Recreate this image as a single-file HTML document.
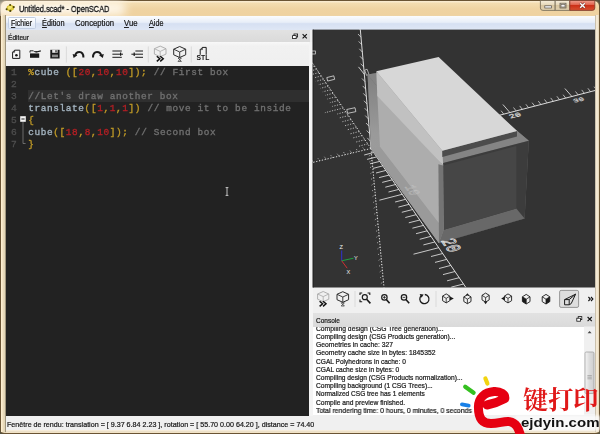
<!DOCTYPE html>
<html><head><meta charset="utf-8">
<style>
*{margin:0;padding:0;box-sizing:border-box}
html,body{width:600px;height:434px;overflow:hidden;background:#55523f;font-family:"Liberation Sans",sans-serif;}
.abs{position:absolute}
#frame{position:absolute;left:0;top:0;width:600px;height:434px;background:linear-gradient(#fbeed6 0,#f3dcb0 2.5px,#efd3a2 8px,#efd2a0 14px,#e9d6b0 16px,#e6d6b6 100%);border:1px solid #6a5434;border-radius:6px 6px 4px 4px;}
#edge{left:4.8px;top:15.6px;width:590.9px;height:415px;border:1px solid rgba(110,95,60,.6);background:#f0f0f0}
#hl{left:7.5px;top:17.3px;width:28.6px;height:12.2px;border:1px solid #c2cee2;border-radius:1.5px;background:linear-gradient(rgba(255,255,255,.85),rgba(230,238,250,.6))}
.mi,.cl{-webkit-text-stroke:0.22px #222}
#title{-webkit-text-stroke:0.35px #111}
#title,#menubar,#edtitle,#editor,#contitle,#console,#status{will-change:transform}
#title{left:19px;top:2.6px;font-size:9.4px;transform-origin:0 50%;color:#111;text-shadow:0 0 3px #fff,0 0 5px #fff;white-space:nowrap;line-height:12px}
#menubar{left:5px;top:16.4px;width:590.2px;height:14px;background:linear-gradient(#fbfcfe 0,#e8eef8 45%,#d6e0f2 55%,#dfe7f5 100%);}
.mi{position:absolute;top:2px;font-size:8.2px;line-height:11px;transform-origin:0 50%;color:#111;white-space:nowrap}
.mi u{text-decoration-thickness:0.6px;text-underline-offset:1px}
#edtitle{left:5px;top:29.6px;width:305px;height:12.8px;background:linear-gradient(#e2e2e2,#dadada);border-bottom:1px solid #cfcfcf}
#edtb{left:5px;top:42.4px;width:306px;height:23.4px;background:linear-gradient(#f8f8f8 0,#f1f1f1 4px,#efefef 100%)}
#editor{left:5.8px;top:65.6px;width:303.2px;height:350.2px;background:#222222}
#splitv{left:309px;top:42px;width:3.7px;height:374px;background:#f4f4f4}
#view{display:block}
#vtb{left:312.5px;top:287.5px;width:282.5px;height:24px;background:#f0f0f0}
#contitle{left:312.5px;top:312.5px;width:282.5px;height:14px;background:linear-gradient(#e2e2e2,#dadada)}
#console{left:312.5px;top:326.5px;width:282.5px;height:88.2px;background:#fff;overflow:hidden}
#status{left:5px;top:415.8px;width:590px;height:13.8px;background:#f0f0f0}
.code{position:absolute;margin-top:0.4px;left:23px;font-family:"Liberation Mono",monospace;font-size:9.4px;letter-spacing:0.64px;line-height:12.4px;white-space:pre;color:#a3b3bf;-webkit-text-stroke:0.35px}
.ln{position:absolute;margin-top:0.4px;left:5.8px;font-family:"Liberation Mono",monospace;font-size:9.6px;line-height:12.4px;color:#4e4e4e;-webkit-text-stroke:0.3px}
.y{color:#c09a26}.r{color:#b21f24}.c{color:#707070}
.cl{position:absolute;left:2.7px;font-size:7.4px;line-height:8.2px;transform-origin:0 50%;color:#111;white-space:nowrap}
</style></head><body>
<div id="frame"></div>
<div class="abs" style="z-index:5;left:1px;top:15px;width:5px;height:417px;background:linear-gradient(to right,#fff3d8 0,#f8e8c8 1.2px,#e9dbbc 2.4px,#e0d4b6 3.9px,#8a7f68 4.7px)"></div><div class="abs" style="z-index:5;left:595px;top:15px;width:4px;height:417px;background:linear-gradient(to right,#8a7f68 0,#fff5e2 0.9px,#eadfca 2px,#fff2da 3.2px,#c8b894 4px)"></div><div class="abs" style="z-index:5;left:6px;top:430px;width:589px;height:3px;background:linear-gradient(#fff5e2 0,#eadfca 1.2px,#f4e4c4 3px)"></div><div class="abs" style="left:0;top:0;width:150px;height:16px;overflow:hidden"><div class="abs" style="left:-6px;top:0.5px;width:132px;height:15px;border-radius:7px;background:#fffaf0;filter:blur(4px);opacity:.85"></div></div><div id="edge" class="abs"></div>
<div id="title" class="abs" style="transform:scaleX(0.7842)">Untitled.scad* - OpenSCAD</div>
<div id="menubar" class="abs">
<div id="hl" class="abs" style="left:2.5px;top:1.3px"></div><span id="m1" class="mi" style="left:5.5px;transform:scaleX(0.8539)"><u>F</u>ichier</span>
<span id="m2" class="mi" style="left:37px;transform:scaleX(0.8983)"><u>É</u>dition</span>
<span id="m3" class="mi" style="left:70px;transform:scaleX(0.9415)">Conception</span>
<span id="m4" class="mi" style="left:118.9px;transform:scaleX(0.9453)"><u>V</u>ue</span>
<span id="m5" class="mi" style="left:143.5px;transform:scaleX(0.8777)"><u>A</u>ide</span>
</div>
<div id="edtitle" class="abs"><span id="m6" class="mi" style="left:3.1px;top:1.9px;font-size:7.2px;transform:scaleX(0.9218)">Éditeur</span></div>
<div id="edtb" class="abs"></div>
<div id="editor" class="abs"><div class="abs" style="left:-0.8px;top:-0.6px">
<div class="abs" style="left:23px;top:25px;width:282px;height:12px;background:#2f2f2f"></div>
<div class="ln" style="top:1px">1</div><div class="code" style="top:1px"><span class="y">%</span>cube <span class="y">([</span><span class="r">20</span><span class="y">,</span><span class="r">10</span><span class="y">,</span><span class="r">10</span><span class="y">]);</span> <span class="c">// First box</span></div>
<div class="ln" style="top:13px">2</div>
<div class="ln" style="top:25px">3</div><div class="code" style="top:25px"><span class="c">//Let's draw another box</span></div>
<div class="ln" style="top:37px">4</div><div class="code" style="top:37px">translate<span class="y">([</span><span class="r">1</span><span class="y">,</span><span class="r">1</span><span class="y">,</span><span class="r">1</span><span class="y">])</span> <span class="c">// move it to be inside</span></div>
<div class="ln" style="top:49px">5</div><div class="code" style="top:49px"><span class="y">{</span></div>
<div class="ln" style="top:61px">6</div><div class="code" style="top:61px">cube<span class="y">([</span><span class="r">18</span><span class="y">,</span><span class="r">8</span><span class="y">,</span><span class="r">10</span><span class="y">]);</span> <span class="c">// Second box</span></div>
<div class="ln" style="top:73px">7</div><div class="code" style="top:73px"><span class="y">}</span></div>
</div>
</div>
<div id="splitv" class="abs"></div>
<svg id="view" class="abs" style="left:312px;top:29px" width="283" height="259" viewBox="312 29 283 259"><rect x="312.7" y="29.6" width="282.3" height="257.9" fill="#333"/><rect x="312.7" y="29.6" width="1" height="257.9" fill="#242424"/><line x1="360.3" y1="29.5" x2="371.0" y2="148.5" stroke="#ededed" stroke-width="0.90" />
<line x1="370.3" y1="141.1" x2="367.3" y2="137.9" stroke="#ededed" stroke-width="0.70" />
<line x1="369.7" y1="133.7" x2="366.7" y2="130.5" stroke="#ededed" stroke-width="0.70" />
<line x1="369.0" y1="126.2" x2="366.0" y2="123.0" stroke="#ededed" stroke-width="0.70" />
<line x1="368.3" y1="118.8" x2="365.3" y2="115.6" stroke="#ededed" stroke-width="0.70" />
<line x1="367.7" y1="111.4" x2="364.7" y2="108.2" stroke="#ededed" stroke-width="0.70" />
<line x1="367.0" y1="104.0" x2="364.0" y2="100.8" stroke="#ededed" stroke-width="0.70" />
<line x1="366.3" y1="96.6" x2="363.3" y2="93.4" stroke="#ededed" stroke-width="0.70" />
<line x1="365.7" y1="89.1" x2="362.7" y2="85.9" stroke="#ededed" stroke-width="0.70" />
<line x1="365.0" y1="81.7" x2="362.0" y2="78.5" stroke="#ededed" stroke-width="0.70" />
<line x1="364.3" y1="74.3" x2="358.5" y2="66.9" stroke="#ededed" stroke-width="0.80" />
<line x1="363.7" y1="66.9" x2="360.7" y2="63.7" stroke="#ededed" stroke-width="0.70" />
<line x1="363.0" y1="59.5" x2="360.0" y2="56.3" stroke="#ededed" stroke-width="0.70" />
<line x1="362.3" y1="52.0" x2="359.3" y2="48.8" stroke="#ededed" stroke-width="0.70" />
<line x1="361.7" y1="44.6" x2="358.7" y2="41.4" stroke="#ededed" stroke-width="0.70" />
<line x1="361.0" y1="37.2" x2="358.0" y2="34.0" stroke="#ededed" stroke-width="0.70" />
<line x1="360.3" y1="29.8" x2="357.3" y2="26.6" stroke="#ededed" stroke-width="0.70" />
<rect x="365.4" y="69.6" width="2.6" height="5.6" fill="none" stroke="#e6e6e6" stroke-width="0.6" transform="rotate(-20 366.5 72)"/>
<line x1="371.0" y1="148.5" x2="595.0" y2="90.5" stroke="#ededed" stroke-width="0.90" />
<line x1="497.5" y1="115.7" x2="494.9" y2="112.3" stroke="#ededed" stroke-width="0.70" />
<line x1="503.7" y1="114.1" x2="501.1" y2="110.7" stroke="#ededed" stroke-width="0.70" />
<line x1="509.9" y1="112.5" x2="502.9" y2="104.5" stroke="#ededed" stroke-width="0.80" />
<line x1="516.1" y1="110.9" x2="513.5" y2="107.5" stroke="#ededed" stroke-width="0.70" />
<line x1="522.3" y1="109.3" x2="519.7" y2="105.9" stroke="#ededed" stroke-width="0.70" />
<line x1="528.5" y1="107.7" x2="525.9" y2="104.3" stroke="#ededed" stroke-width="0.70" />
<line x1="534.7" y1="106.1" x2="532.1" y2="102.7" stroke="#ededed" stroke-width="0.70" />
<line x1="540.9" y1="104.5" x2="538.3" y2="101.1" stroke="#ededed" stroke-width="0.70" />
<line x1="547.1" y1="102.9" x2="544.5" y2="99.5" stroke="#ededed" stroke-width="0.70" />
<line x1="553.3" y1="101.3" x2="550.7" y2="97.9" stroke="#ededed" stroke-width="0.70" />
<line x1="559.5" y1="99.7" x2="556.9" y2="96.3" stroke="#ededed" stroke-width="0.70" />
<line x1="565.7" y1="98.1" x2="563.1" y2="94.7" stroke="#ededed" stroke-width="0.70" />
<line x1="571.9" y1="96.5" x2="564.9" y2="88.5" stroke="#ededed" stroke-width="0.80" />
<line x1="578.1" y1="94.9" x2="575.5" y2="91.5" stroke="#ededed" stroke-width="0.70" />
<line x1="584.3" y1="93.3" x2="581.7" y2="89.9" stroke="#ededed" stroke-width="0.70" />
<line x1="590.5" y1="91.7" x2="587.9" y2="88.3" stroke="#ededed" stroke-width="0.70" />
<line x1="596.7" y1="90.1" x2="594.1" y2="86.7" stroke="#ededed" stroke-width="0.70" />
<text font-size="10" fill="none" stroke="#e6e6e6" stroke-width="0.55" font-family="Liberation Mono,monospace" transform="matrix(0.93,-0.24,0.37,0.54,510.6,118.6)">20</text>
<text font-size="10" fill="none" stroke="#e6e6e6" stroke-width="0.55" font-family="Liberation Mono,monospace" transform="matrix(0.85,-0.22,0.33,0.48,574.6,102.8)">30</text>
<line x1="370.7" y1="148.2" x2="465.7" y2="287.2" stroke="#ededed" stroke-width="0.90" />
<line x1="373.6" y1="152.5" x2="364.2" y2="155.0" stroke="#ededed" stroke-width="0.80" />
<line x1="376.6" y1="156.9" x2="367.1" y2="159.4" stroke="#ededed" stroke-width="0.80" />
<line x1="379.7" y1="161.4" x2="370.0" y2="163.8" stroke="#ededed" stroke-width="0.80" />
<line x1="382.7" y1="165.9" x2="373.0" y2="168.4" stroke="#ededed" stroke-width="0.80" />
<line x1="385.9" y1="170.4" x2="376.0" y2="173.0" stroke="#ededed" stroke-width="0.80" />
<line x1="389.0" y1="175.1" x2="379.1" y2="177.6" stroke="#ededed" stroke-width="0.80" />
<line x1="392.3" y1="179.8" x2="382.2" y2="182.4" stroke="#ededed" stroke-width="0.80" />
<line x1="395.5" y1="184.5" x2="385.3" y2="187.2" stroke="#ededed" stroke-width="0.80" />
<line x1="398.8" y1="189.4" x2="388.5" y2="192.0" stroke="#ededed" stroke-width="0.80" />
<line x1="402.2" y1="194.3" x2="379.4" y2="200.2" stroke="#ededed" stroke-width="0.80" />
<line x1="405.6" y1="199.3" x2="395.1" y2="202.0" stroke="#ededed" stroke-width="0.80" />
<line x1="409.1" y1="204.3" x2="398.4" y2="207.1" stroke="#ededed" stroke-width="0.80" />
<line x1="412.6" y1="209.5" x2="401.8" y2="212.3" stroke="#ededed" stroke-width="0.80" />
<line x1="416.1" y1="214.7" x2="405.3" y2="217.5" stroke="#ededed" stroke-width="0.80" />
<line x1="419.8" y1="220.0" x2="408.8" y2="222.8" stroke="#ededed" stroke-width="0.80" />
<line x1="423.4" y1="225.4" x2="412.4" y2="228.2" stroke="#ededed" stroke-width="0.80" />
<line x1="427.2" y1="230.8" x2="416.0" y2="233.7" stroke="#ededed" stroke-width="0.80" />
<line x1="431.0" y1="236.3" x2="419.7" y2="239.3" stroke="#ededed" stroke-width="0.80" />
<line x1="434.8" y1="242.0" x2="423.4" y2="244.9" stroke="#ededed" stroke-width="0.80" />
<line x1="438.7" y1="247.7" x2="413.5" y2="254.2" stroke="#ededed" stroke-width="0.80" />
<line x1="442.7" y1="253.5" x2="431.0" y2="256.5" stroke="#ededed" stroke-width="0.80" />
<line x1="446.7" y1="259.4" x2="435.0" y2="262.4" stroke="#ededed" stroke-width="0.80" />
<line x1="450.8" y1="265.4" x2="439.0" y2="268.5" stroke="#ededed" stroke-width="0.80" />
<line x1="455.0" y1="271.5" x2="443.0" y2="274.6" stroke="#ededed" stroke-width="0.80" />
<line x1="459.2" y1="277.7" x2="447.1" y2="280.8" stroke="#ededed" stroke-width="0.80" />
<line x1="463.5" y1="284.0" x2="451.3" y2="287.1" stroke="#ededed" stroke-width="0.80" />
<line x1="370.7" y1="148.2" x2="303.7" y2="50.3" stroke="#ededed" stroke-width="0.90" stroke-dasharray="1.3 1.6"/>
<line x1="367.7" y1="143.9" x2="358.5" y2="146.3" stroke="#ededed" stroke-width="0.70" stroke-dasharray="1.2 1.4"/>
<line x1="364.9" y1="139.7" x2="355.8" y2="142.1" stroke="#ededed" stroke-width="0.70" stroke-dasharray="1.2 1.4"/>
<line x1="362.0" y1="135.6" x2="353.0" y2="137.9" stroke="#ededed" stroke-width="0.70" stroke-dasharray="1.2 1.4"/>
<line x1="359.2" y1="131.5" x2="350.3" y2="133.8" stroke="#ededed" stroke-width="0.70" stroke-dasharray="1.2 1.4"/>
<line x1="356.5" y1="127.4" x2="347.6" y2="129.7" stroke="#ededed" stroke-width="0.70" stroke-dasharray="1.2 1.4"/>
<line x1="353.7" y1="123.4" x2="345.0" y2="125.7" stroke="#ededed" stroke-width="0.70" stroke-dasharray="1.2 1.4"/>
<line x1="351.0" y1="119.5" x2="342.4" y2="121.7" stroke="#ededed" stroke-width="0.70" stroke-dasharray="1.2 1.4"/>
<line x1="348.4" y1="115.6" x2="339.8" y2="117.8" stroke="#ededed" stroke-width="0.70" stroke-dasharray="1.2 1.4"/>
<line x1="345.7" y1="111.8" x2="337.3" y2="114.0" stroke="#ededed" stroke-width="0.70" stroke-dasharray="1.2 1.4"/>
<line x1="343.2" y1="108.0" x2="324.9" y2="112.7" stroke="#ededed" stroke-width="0.70" stroke-dasharray="1.2 1.4"/>
<line x1="340.6" y1="104.3" x2="332.3" y2="106.4" stroke="#ededed" stroke-width="0.70" stroke-dasharray="1.2 1.4"/>
<line x1="338.1" y1="100.6" x2="329.9" y2="102.7" stroke="#ededed" stroke-width="0.70" stroke-dasharray="1.2 1.4"/>
<line x1="335.6" y1="96.9" x2="327.5" y2="99.0" stroke="#ededed" stroke-width="0.70" stroke-dasharray="1.2 1.4"/>
<line x1="333.1" y1="93.3" x2="325.1" y2="95.4" stroke="#ededed" stroke-width="0.70" stroke-dasharray="1.2 1.4"/>
<line x1="330.7" y1="89.8" x2="322.8" y2="91.8" stroke="#ededed" stroke-width="0.70" stroke-dasharray="1.2 1.4"/>
<line x1="328.3" y1="86.2" x2="320.5" y2="88.3" stroke="#ededed" stroke-width="0.70" stroke-dasharray="1.2 1.4"/>
<line x1="325.9" y1="82.8" x2="318.2" y2="84.8" stroke="#ededed" stroke-width="0.70" stroke-dasharray="1.2 1.4"/>
<line x1="323.6" y1="79.4" x2="315.9" y2="81.3" stroke="#ededed" stroke-width="0.70" stroke-dasharray="1.2 1.4"/>
<line x1="321.3" y1="76.0" x2="313.7" y2="77.9" stroke="#ededed" stroke-width="0.70" stroke-dasharray="1.2 1.4"/>
<line x1="319.0" y1="72.6" x2="302.7" y2="76.8" stroke="#ededed" stroke-width="0.70" stroke-dasharray="1.2 1.4"/>
<line x1="316.7" y1="69.3" x2="309.4" y2="71.2" stroke="#ededed" stroke-width="0.70" stroke-dasharray="1.2 1.4"/>
<line x1="314.5" y1="66.1" x2="307.2" y2="67.9" stroke="#ededed" stroke-width="0.70" stroke-dasharray="1.2 1.4"/>
<line x1="312.3" y1="62.8" x2="305.1" y2="64.7" stroke="#ededed" stroke-width="0.70" stroke-dasharray="1.2 1.4"/>
<line x1="310.1" y1="59.6" x2="303.0" y2="61.5" stroke="#ededed" stroke-width="0.70" stroke-dasharray="1.2 1.4"/>
<line x1="307.9" y1="56.5" x2="301.0" y2="58.3" stroke="#ededed" stroke-width="0.70" stroke-dasharray="1.2 1.4"/>
<line x1="305.8" y1="53.4" x2="298.9" y2="55.1" stroke="#ededed" stroke-width="0.70" stroke-dasharray="1.2 1.4"/>
<line x1="371.0" y1="148.5" x2="312.5" y2="162.5" stroke="#ededed" stroke-width="0.90" stroke-dasharray="1.3 1.6"/>
<line x1="364.6" y1="150.0" x2="362.2" y2="146.8" stroke="#ededed" stroke-width="0.70" stroke-dasharray="1 1"/>
<line x1="358.2" y1="151.6" x2="355.8" y2="148.4" stroke="#ededed" stroke-width="0.70" stroke-dasharray="1 1"/>
<line x1="351.8" y1="153.1" x2="349.4" y2="149.9" stroke="#ededed" stroke-width="0.70" stroke-dasharray="1 1"/>
<line x1="345.4" y1="154.6" x2="343.0" y2="151.4" stroke="#ededed" stroke-width="0.70" stroke-dasharray="1 1"/>
<line x1="339.0" y1="156.2" x2="336.6" y2="153.0" stroke="#ededed" stroke-width="0.70" stroke-dasharray="1 1"/>
<line x1="332.6" y1="157.7" x2="330.2" y2="154.5" stroke="#ededed" stroke-width="0.70" stroke-dasharray="1 1"/>
<line x1="326.2" y1="159.2" x2="323.8" y2="156.0" stroke="#ededed" stroke-width="0.70" stroke-dasharray="1 1"/>
<line x1="319.8" y1="160.8" x2="317.4" y2="157.6" stroke="#ededed" stroke-width="0.70" stroke-dasharray="1 1"/>
<line x1="313.4" y1="162.3" x2="311.0" y2="159.1" stroke="#ededed" stroke-width="0.70" stroke-dasharray="1 1"/>
<line x1="371.0" y1="148.5" x2="384.0" y2="287.5" stroke="#ededed" stroke-width="0.90" stroke-dasharray="1.3 1.6"/>
<line x1="371.5" y1="154.3" x2="368.1" y2="156.7" stroke="#ededed" stroke-width="0.70" stroke-dasharray="1 1.2"/>
<line x1="372.1" y1="160.1" x2="368.7" y2="162.5" stroke="#ededed" stroke-width="0.70" stroke-dasharray="1 1.2"/>
<line x1="372.6" y1="165.9" x2="369.2" y2="168.3" stroke="#ededed" stroke-width="0.70" stroke-dasharray="1 1.2"/>
<line x1="373.2" y1="171.7" x2="369.8" y2="174.1" stroke="#ededed" stroke-width="0.70" stroke-dasharray="1 1.2"/>
<line x1="373.7" y1="177.5" x2="370.3" y2="179.9" stroke="#ededed" stroke-width="0.70" stroke-dasharray="1 1.2"/>
<line x1="374.2" y1="183.2" x2="370.9" y2="185.7" stroke="#ededed" stroke-width="0.70" stroke-dasharray="1 1.2"/>
<line x1="374.8" y1="189.0" x2="371.4" y2="191.4" stroke="#ededed" stroke-width="0.70" stroke-dasharray="1 1.2"/>
<line x1="375.3" y1="194.8" x2="371.9" y2="197.2" stroke="#ededed" stroke-width="0.70" stroke-dasharray="1 1.2"/>
<line x1="375.9" y1="200.6" x2="372.5" y2="203.0" stroke="#ededed" stroke-width="0.70" stroke-dasharray="1 1.2"/>
<line x1="376.4" y1="206.4" x2="373.0" y2="208.8" stroke="#ededed" stroke-width="0.70" stroke-dasharray="1 1.2"/>
<line x1="377.0" y1="212.2" x2="373.6" y2="214.6" stroke="#ededed" stroke-width="0.70" stroke-dasharray="1 1.2"/>
<line x1="377.5" y1="218.0" x2="374.1" y2="220.4" stroke="#ededed" stroke-width="0.70" stroke-dasharray="1 1.2"/>
<line x1="378.0" y1="223.8" x2="374.6" y2="226.2" stroke="#ededed" stroke-width="0.70" stroke-dasharray="1 1.2"/>
<line x1="378.6" y1="229.6" x2="375.2" y2="232.0" stroke="#ededed" stroke-width="0.70" stroke-dasharray="1 1.2"/>
<line x1="379.1" y1="235.4" x2="375.7" y2="237.8" stroke="#ededed" stroke-width="0.70" stroke-dasharray="1 1.2"/>
<line x1="379.7" y1="241.2" x2="376.3" y2="243.6" stroke="#ededed" stroke-width="0.70" stroke-dasharray="1 1.2"/>
<line x1="380.2" y1="247.0" x2="376.8" y2="249.4" stroke="#ededed" stroke-width="0.70" stroke-dasharray="1 1.2"/>
<line x1="380.8" y1="252.8" x2="377.4" y2="255.2" stroke="#ededed" stroke-width="0.70" stroke-dasharray="1 1.2"/>
<line x1="381.3" y1="258.5" x2="377.9" y2="260.9" stroke="#ededed" stroke-width="0.70" stroke-dasharray="1 1.2"/>
<line x1="381.8" y1="264.3" x2="378.4" y2="266.7" stroke="#ededed" stroke-width="0.70" stroke-dasharray="1 1.2"/>
<line x1="382.4" y1="270.1" x2="379.0" y2="272.5" stroke="#ededed" stroke-width="0.70" stroke-dasharray="1 1.2"/>
<line x1="382.9" y1="275.9" x2="379.5" y2="278.3" stroke="#ededed" stroke-width="0.70" stroke-dasharray="1 1.2"/>
<line x1="383.5" y1="281.7" x2="380.1" y2="284.1" stroke="#ededed" stroke-width="0.70" stroke-dasharray="1 1.2"/>
<rect x="327" y="76.8" width="7.2" height="3.6" fill="none" stroke="#e6e6e6" stroke-width="0.7" transform="rotate(-14 330 78)"/>
<rect x="347" y="108.6" width="8.4" height="4" fill="none" stroke="#e6e6e6" stroke-width="0.7" transform="rotate(-12 351 110)"/>
<rect x="311" y="51" width="4.6" height="3" fill="none" stroke="#e6e6e6" stroke-width="0.7"/>
<polygon points="367.6,74.5 437.0,63.0 528.8,140.7 524.6,218.5 439.0,243.3 371.0,148.5" fill="#6e6e6e" />
<polygon points="367.6,74.5 438.4,164.3 528.8,140.7 437.0,63.0" fill="#848484" />
<defs><linearGradient id="lf" x1="0" y1="0" x2="0" y2="1"><stop offset="0" stop-color="#808080"/><stop offset="0.35" stop-color="#9a9a9a"/><stop offset="1" stop-color="#a0a0a0"/></linearGradient></defs>
<polygon points="367.6,74.5 438.4,164.3 439.0,243.3 371.0,148.5" fill="url(#lf)" />
<polygon points="438.4,164.3 528.8,140.7 524.6,218.5 439.0,243.3" fill="#3c3c3c" />
<polygon points="443.8,229.8 516.3,208.5 524.6,218.5 439.0,243.3" fill="#686868" />
<polygon points="377.2,92.5 443.2,165.6 443.8,229.8 380.0,147.0" fill="#adadad" />
<polygon points="371.0,148.5 380.0,147.0 443.8,229.8 439.0,243.3" fill="#9a9a9a" />
<polygon points="443.2,165.6 516.3,146.0 516.3,208.5 443.8,229.8" fill="#464646" />
<polygon points="376.3,71.2 442.3,150.7 443.2,165.6 377.3,96.0" fill="#c1c1c1" />
<polygon points="442.3,150.7 517.0,130.9 517.0,136.6 442.3,157.0" fill="#4c4c4c" />
<polygon points="376.3,71.2 442.3,150.7 517.0,130.9 438.6,57.0" fill="#d7d7d7" />
<polygon points="438.4,164.3 443.2,165.6 443.8,229.8 439.0,243.3" fill="#747474" />
<text font-size="10" fill="none" stroke="#c0c0c0" stroke-width="0.3" font-family="Liberation Mono,monospace" transform="matrix(0.55,0.80,-1.45,0.37,404.5,186.5)">10</text>
<text font-size="10" fill="none" stroke="#f0f0f0" stroke-width="0.42" font-family="Liberation Mono,monospace" transform="matrix(0.706,1.03,-1.91,0.49,440.8,240.6)">20</text>
<line x1="341.7" y1="260.8" x2="341.7" y2="250.5" stroke="#3030d0" stroke-width="1.00" />
<line x1="341.7" y1="260.8" x2="353.5" y2="258.2" stroke="#20a040" stroke-width="1.00" />
<line x1="341.7" y1="260.8" x2="347.2" y2="268.2" stroke="#d03030" stroke-width="1.00" />
<text x="339.6" y="248.6" font-size="5.6" fill="#f0f0f0" font-family="Liberation Sans,sans-serif">Z</text>
<text x="354" y="260" font-size="5.6" fill="#f0f0f0" font-family="Liberation Sans,sans-serif">Y</text>
<text x="346.6" y="273.5" font-size="5.6" fill="#f0f0f0" font-family="Liberation Sans,sans-serif">X</text></svg>
<div id="vtb" class="abs"></div>
<div id="contitle" class="abs"><span id="m7" class="mi" style="left:2.8px;top:1.9px;font-size:7.2px;transform:scaleX(0.9062)">Console</span></div>
<div id="console" class="abs">
<div id="c0" class="cl" style="top:-2.10px;transform:scaleX(0.9129)">Compiling design (CSG Tree generation)...</div>
<div id="c1" class="cl" style="top:6.09px;transform:scaleX(0.9049)">Compiling design (CSG Products generation)...</div>
<div id="c2" class="cl" style="top:14.28px;transform:scaleX(0.9143)">Geometries in cache: 327</div>
<div id="c3" class="cl" style="top:22.47px;transform:scaleX(0.9204)">Geometry cache size in bytes: 1845352</div>
<div id="c4" class="cl" style="top:30.66px;transform:scaleX(0.8909)">CGAL Polyhedrons in cache: 0</div>
<div id="c5" class="cl" style="top:38.85px;transform:scaleX(0.8998)">CGAL cache size in bytes: 0</div>
<div id="c6" class="cl" style="top:47.04px;transform:scaleX(0.8983)">Compiling design (CSG Products normalization)...</div>
<div id="c7" class="cl" style="top:55.23px;transform:scaleX(0.9019)">Compiling background (1 CSG Trees)...</div>
<div id="c8" class="cl" style="top:63.42px;transform:scaleX(0.8887)">Normalized CSG tree has 1 elements</div>
<div id="c9" class="cl" style="top:71.61px;transform:scaleX(0.9027)">Compile and preview finished.</div>
<div id="c10" class="cl" style="top:79.80px;transform:scaleX(0.9295)">Total rendering time: 0 hours, 0 minutes, 0 seconds</div>
</div>
<div id="status" class="abs"><span id="m8" class="mi" style="left:1.5px;top:2.9px;font-size:7.6px;transform:scaleX(0.9398)">Fenêtre de rendu: translation = [ 9.37 6.84 2.23 ], rotation = [ 55.70 0.00 64.20 ], distance = 74.40</span></div>
<svg class="abs" style="left:0;top:0;pointer-events:none" width="600" height="434" viewBox="0 0 600 434"><line x1="66.4" y1="46.5" x2="66.4" y2="62.5" stroke="#d4d4d4" stroke-width="0.8"/>
<line x1="148.3" y1="46.5" x2="148.3" y2="62.5" stroke="#d4d4d4" stroke-width="0.8"/>
<line x1="191.3" y1="46.5" x2="191.3" y2="62.5" stroke="#d4d4d4" stroke-width="0.8"/>
<path d="M14.6 50.2 H19.8 V58.4 H12.6 V52.2 Z" fill="#f6f6f6" stroke="#1a1a1a" stroke-width="1"/>
<path d="M14.6 50.2 V52.2 H12.6" fill="none" stroke="#1a1a1a" stroke-width="0.8"/>
<circle cx="16.4" cy="55.2" r="1.3" fill="#1a1a1a"/>
<path d="M30 53.4 H39.2 V57.8 H30 Z" fill="#1a1a1a"/>
<path d="M30 52.6 V50.8 H33.4 L34.2 51.6 H37.5" fill="none" stroke="#1a1a1a" stroke-width="0.9"/>
<path d="M35.5 52.3 L40.8 50.9" stroke="#1a1a1a" stroke-width="1.1"/>
<path d="M50.3 49.8 H59.6 V58.5 H50.3 Z" fill="#1a1a1a"/>
<rect x="52.2" y="49.8" width="5.4" height="3" fill="#e8e8e8"/>
<rect x="55.4" y="50.2" width="1.2" height="2.2" fill="#1a1a1a"/>
<rect x="52" y="54.6" width="6" height="2.6" fill="#8a8a8a"/>
<path d="M75.2 56 C75.5 53 77.5 51.9 79.4 51.9 C82 51.9 83.4 54 83.4 57.4" fill="none" stroke="#1a1a1a" stroke-width="2"/>
<path d="M72.6 54 L77.4 55.2 L73.6 58 Z" fill="#1a1a1a"/>
<path d="M101.2 56 C100.9 53 98.9 51.9 97 51.9 C94.4 51.9 93 54 93 57.4" fill="none" stroke="#1a1a1a" stroke-width="2"/>
<path d="M103.8 54 L99 55.2 L102.8 58 Z" fill="#1a1a1a"/>
<line x1="112.4" y1="51" x2="121.8" y2="51" stroke="#1a1a1a" stroke-width="1"/>
<line x1="112.4" y1="57.3" x2="121.8" y2="57.3" stroke="#1a1a1a" stroke-width="1"/>
<line x1="112.4" y1="54.2" x2="123" y2="54.2" stroke="#1a1a1a" stroke-width="1"/>
<line x1="120.6" y1="52.6" x2="120.6" y2="55.8" stroke="#1a1a1a" stroke-width="1.2"/>
<line x1="135.4" y1="51" x2="143" y2="51" stroke="#1a1a1a" stroke-width="1"/>
<line x1="135.4" y1="57.3" x2="143" y2="57.3" stroke="#1a1a1a" stroke-width="1"/>
<line x1="131.4" y1="54.2" x2="143" y2="54.2" stroke="#1a1a1a" stroke-width="1"/>
<line x1="134.2" y1="52.4" x2="134.2" y2="56" stroke="#1a1a1a" stroke-width="1.2"/>
<polygon points="160.2,46.1 154.4,48.7 154.4,54.1 160.2,56.7 166.0,54.1 166.0,48.7" fill="none" stroke="#a8a8a8" stroke-width="0.9" stroke-linejoin="round"/><path d="M154.4 48.7 L160.2 51.4 L166.0 48.7 M160.2 51.4 V56.7" fill="none" stroke="#a8a8a8" stroke-width="0.81"/>
<path d="M156.8 56.2 l3.0 2.6 l-3.0 2.6 M160.2 56.2 l3.0 2.6 l-3.0 2.6" fill="none" stroke="#111" stroke-width="1.5"/>
<polygon points="179.7,46.5 173.7,49.2 173.7,54.8 179.7,57.5 185.7,54.8 185.7,49.2" fill="none" stroke="#2a2a2a" stroke-width="1.0" stroke-linejoin="round"/><path d="M173.7 49.2 L179.7 52.0 L185.7 49.2 M179.7 52.0 V57.5" fill="none" stroke="#2a2a2a" stroke-width="0.9"/>
<path d="M178 58 H181.4 L178 61.4 H181.4 Z" fill="none" stroke="#2a2a2a" stroke-width="0.7"/>
<path d="M200.2 54.8 V49.6 L202.4 47.4 H206.2 V54.8" fill="none" stroke="#1a1a1a" stroke-width="1"/>
<path d="M200.2 49.6 H202.4 V47.4" fill="none" stroke="#1a1a1a" stroke-width="0.7"/>
<text x="196.6" y="60.4" font-size="7" font-weight="bold" fill="#111" font-family="Liberation Sans,sans-serif" textLength="12.8" lengthAdjust="spacingAndGlyphs">STL</text>
<rect x="294.0" y="34" width="3.6" height="3" fill="#fff" stroke="#111" stroke-width="0.8"/>
<rect x="292.6" y="35.6" width="3.6" height="3" fill="#fff" stroke="#111" stroke-width="0.8"/>
<path d="M302.6 34.2 l4.2 4.2 m0 -4.2 l-4.2 4.2" stroke="#111" stroke-width="1.1" fill="none"/>
<rect x="578.1999999999999" y="316.6" width="3.6" height="3" fill="#fff" stroke="#111" stroke-width="0.8"/>
<rect x="576.8" y="318.20000000000005" width="3.6" height="3" fill="#fff" stroke="#111" stroke-width="0.8"/>
<path d="M587.6 317 l4.2 4.2 m0 -4.2 l-4.2 4.2" stroke="#111" stroke-width="1.1" fill="none"/>
<line x1="355" y1="291" x2="355" y2="307" stroke="#d4d4d4" stroke-width="0.8"/>
<line x1="436" y1="291" x2="436" y2="307" stroke="#d4d4d4" stroke-width="0.8"/>
<polygon points="323.2,291.5 317.6,294.0 317.6,299.2 323.2,301.7 328.8,299.2 328.8,294.0" fill="none" stroke="#a8a8a8" stroke-width="0.9" stroke-linejoin="round"/><path d="M317.6 294.0 L323.2 296.6 L328.8 294.0 M323.2 296.6 V301.7" fill="none" stroke="#a8a8a8" stroke-width="0.81"/>
<path d="M319.6 301.2 l3.0 2.6 l-3.0 2.6 M323.0 301.2 l3.0 2.6 l-3.0 2.6" fill="none" stroke="#111" stroke-width="1.5"/>
<polygon points="342.8,291.7 337.0,294.3 337.0,299.7 342.8,302.3 348.6,299.7 348.6,294.3" fill="none" stroke="#2a2a2a" stroke-width="1.0" stroke-linejoin="round"/><path d="M337.0 294.3 L342.8 297.0 L348.6 294.3 M342.8 297.0 V302.3" fill="none" stroke="#2a2a2a" stroke-width="0.9"/>
<path d="M341.2 302.8 H344.4 L341.2 306 H344.4 Z" fill="none" stroke="#2a2a2a" stroke-width="0.7"/>
<path d="M360 295 V293 H362.2 M367.6 293 H369.8 V295 M360 299.6 V301.8 H362.2" fill="none" stroke="#1a1a1a" stroke-width="1.1"/>
<circle cx="364.8" cy="297.2" r="2.5" fill="none" stroke="#1a1a1a" stroke-width="1.2"/>
<line x1="366.6" y1="299.2" x2="370.4" y2="303.4" stroke="#1a1a1a" stroke-width="1.6"/>
<circle cx="384.4" cy="297.4" r="2.7" fill="none" stroke="#1a1a1a" stroke-width="1.2"/>
<line x1="386.29999999999995" y1="299.4" x2="389.59999999999997" y2="303.2" stroke="#1a1a1a" stroke-width="1.6"/>
<line x1="383.0" y1="297.4" x2="385.79999999999995" y2="297.4" stroke="#1a1a1a" stroke-width="0.8"/>
<line x1="384.4" y1="296" x2="384.4" y2="298.8" stroke="#1a1a1a" stroke-width="0.8"/>
<circle cx="404" cy="297.4" r="2.7" fill="none" stroke="#1a1a1a" stroke-width="1.2"/>
<line x1="405.9" y1="299.4" x2="409.2" y2="303.2" stroke="#1a1a1a" stroke-width="1.6"/>
<line x1="402.6" y1="297.4" x2="405.4" y2="297.4" stroke="#1a1a1a" stroke-width="0.8"/>
<path d="M421.4 295.6 A4.6 4.6 0 1 0 424.8 294.5" fill="none" stroke="#1a1a1a" stroke-width="1.3"/>
<path d="M419.6 294 L423.6 294.4 L421.6 297.8 Z" fill="#1a1a1a"/>
<polygon points="446.2,293.9 442.6,296.1 442.6,300.7 446.2,302.9 449.8,300.7 449.8,296.1" fill="none" stroke="#1a1a1a" stroke-width="0.9" stroke-linejoin="round"/><path d="M442.6 296.1 L446.2 298.4 L449.8 296.1 M446.2 298.4 V302.9" fill="none" stroke="#1a1a1a" stroke-width="0.8"/>
<path d="M450 296.4 L453.8 298.4 L450 300.4 Z" fill="#1a1a1a"/>
<polygon points="467.4,294.7 463.8,296.9 463.8,301.5 467.4,303.7 471.0,301.5 471.0,296.9" fill="none" stroke="#1a1a1a" stroke-width="0.9" stroke-linejoin="round"/><path d="M463.8 296.9 L467.4 299.2 L471.0 296.9 M467.4 299.2 V303.7" fill="none" stroke="#1a1a1a" stroke-width="0.8"/>
<path d="M465.6 295.4 L467.4 293.2 L469.2 295.4 Z" fill="#1a1a1a"/>
<polygon points="485.6,293.1 482.0,295.3 482.0,299.9 485.6,302.1 489.2,299.9 489.2,295.3" fill="none" stroke="#1a1a1a" stroke-width="0.9" stroke-linejoin="round"/><path d="M482.0 295.3 L485.6 297.6 L489.2 295.3 M485.6 297.6 V302.1" fill="none" stroke="#1a1a1a" stroke-width="0.8"/>
<path d="M483.8 301.6 L485.6 304.2 L487.4 301.6 Z" fill="#1a1a1a"/>
<polygon points="508.0,293.9 504.4,296.1 504.4,300.7 508.0,302.9 511.6,300.7 511.6,296.1" fill="none" stroke="#1a1a1a" stroke-width="0.9" stroke-linejoin="round"/><path d="M504.4 296.1 L508.0 298.4 L511.6 296.1 M508.0 298.4 V302.9" fill="none" stroke="#1a1a1a" stroke-width="0.8"/>
<path d="M504.6 296.4 L501.2 298.4 L504.6 300.4 Z" fill="#1a1a1a"/>
<polygon points="522.4,296.8 526.2,299.2 526.2,304.0 522.4,301.6" fill="#1a1a1a"/><polygon points="526.2,294.4 522.4,296.8 522.4,301.6 526.2,304.0 530.0,301.6 530.0,296.8" fill="none" stroke="#1a1a1a" stroke-width="0.9" stroke-linejoin="round"/><path d="M522.4 296.8 L526.2 299.2 L530.0 296.8 M526.2 299.2 V304.0" fill="none" stroke="#1a1a1a" stroke-width="0.8"/>
<polygon points="549.8,296.8 546.0,299.2 546.0,304.0 549.8,301.6" fill="#1a1a1a"/><polygon points="546.0,294.4 542.2,296.8 542.2,301.6 546.0,304.0 549.8,301.6 549.8,296.8" fill="none" stroke="#1a1a1a" stroke-width="0.9" stroke-linejoin="round"/><path d="M542.2 296.8 L546.0 299.2 L549.8 296.8 M546.0 299.2 V304.0" fill="none" stroke="#1a1a1a" stroke-width="0.8"/>
<rect x="559.6" y="290.4" width="19" height="17" rx="1.5" fill="#dedede" stroke="#8c8c8c" stroke-width="0.9"/>
<path d="M564.6 299.6 L575.6 294.2 L571.2 303.6 L569.2 304.8 H564.6 Z M564.6 299.6 H569.2 V304.8 M569.2 299.6 L575.6 294.2" fill="none" stroke="#1a1a1a" stroke-width="1" stroke-linejoin="round"/>
<path d="M588.4 297.0 l1.9 2.0 l-1.9 2.0 M591.0 297.0 l1.9 2.0 l-1.9 2.0" fill="none" stroke="#111" stroke-width="1.1"/></svg>
<svg class="abs" style="left:0;top:0;pointer-events:none;z-index:6" width="600" height="434" viewBox="0 0 600 434"><defs><filter id="bl" x="-10%" y="-30%" width="120%" height="160%"><feGaussianBlur stdDeviation="1.2"/></filter></defs>
<path d="M7 6.2 L10.4 4.2 L14.6 6.4 L13.8 9.6 L10.2 11.8 L6 9.8 Z" fill="#dcc83a"/>
<path d="M8.4 6.6 L10.8 5.6 L12.4 7.2 L10 9.4 L7.8 8.6 Z" fill="#f2e66a"/>
<circle cx="10.1" cy="5.0" r="1.0" fill="#4e4608"/>
<circle cx="13.7" cy="7.1" r="1.1" fill="#4e4608"/>
<circle cx="6.6" cy="9.3" r="1.0" fill="#4e4608"/>
<circle cx="10.3" cy="10.9" r="1.1" fill="#4e4608"/>
<defs><linearGradient id="gb" x1="0" y1="0" x2="0" y2="1"><stop offset="0" stop-color="#f6eedc"/><stop offset="0.45" stop-color="#e6d8b8"/><stop offset="0.5" stop-color="#d8c6a0"/><stop offset="1" stop-color="#e2d2b0"/></linearGradient><linearGradient id="gr" x1="0" y1="0" x2="0" y2="1"><stop offset="0" stop-color="#f0a090"/><stop offset="0.45" stop-color="#e0604a"/><stop offset="0.5" stop-color="#cc3018"/><stop offset="1" stop-color="#d85030"/></linearGradient></defs>
<path d="M540.4 0.5 V8 Q540.4 10.4 543 10.4 H555.2 V0.5 Z" fill="url(#gb)" stroke="#6e6450" stroke-width="0.8"/>
<path d="M555.2 0.5 V10.4 H569.8 V0.5 Z" fill="url(#gb)" stroke="#6e6450" stroke-width="0.8"/>
<path d="M569.8 0.5 V10.4 H592.2 Q594.8 10.4 594.8 8 V0.5 Z" fill="url(#gr)" stroke="#7a3a2a" stroke-width="0.8"/>
<rect x="544.8" y="5.8" width="6.6" height="2.2" fill="#f4f4f4" stroke="#55504a" stroke-width="0.7"/>
<rect x="560" y="3.2" width="6" height="4.8" fill="none" stroke="#55504a" stroke-width="0.7"/><rect x="561" y="4.4" width="4" height="2.6" fill="#f4f4f4" stroke="#55504a" stroke-width="0.6"/>
<path d="M580.2 3.2 L584.8 7.8 M584.8 3.2 L580.2 7.8" stroke="#6a2a20" stroke-width="2.4" fill="none"/><path d="M580.2 3.2 L584.8 7.8 M584.8 3.2 L580.2 7.8" stroke="#fff" stroke-width="1.4" fill="none"/>
<rect x="20.2" y="116.2" width="5.6" height="5.6" fill="#f4f4f4"/><line x1="21.4" y1="119" x2="24.6" y2="119" stroke="#222" stroke-width="1"/>
<path d="M23 122 V143.5 H25.6" fill="none" stroke="#8a8a8a" stroke-width="0.7"/>
<path d="M225.6 187.6 H228.4 M227 187.6 V195.4 M225.6 195.4 H228.4" stroke="#e8e8e8" stroke-width="0.8" fill="none"/>
<rect x="584" y="326.5" width="11" height="88.2" fill="#f0f0f0"/>
<path d="M587.6 333.2 L589.6 331 L591.6 333.2 Z" fill="#444"/>
<defs><linearGradient id="th" x1="0" y1="0" x2="1" y2="0"><stop offset="0" stop-color="#f4f4f4"/><stop offset="0.5" stop-color="#dcdcdc"/><stop offset="1" stop-color="#cfcfcf"/></linearGradient></defs>
<rect x="585" y="352" width="9" height="41.5" rx="1.2" fill="url(#th)" stroke="#9a9a9a" stroke-width="0.7"/>
<line x1="587.4" y1="375.6" x2="591.8" y2="375.6" stroke="#8a8a8a" stroke-width="0.6"/>
<line x1="587.4" y1="377.2" x2="591.8" y2="377.2" stroke="#8a8a8a" stroke-width="0.6"/>
<line x1="587.4" y1="378.8" x2="591.8" y2="378.8" stroke="#8a8a8a" stroke-width="0.6"/>
<rect x="516" y="415.5" width="84" height="15" fill="#fbfbfb" opacity="0.85" filter="url(#bl)"/>
<path d="M487 405 C493.6 403.6 499.4 401.6 504.8 398.6 C505.4 394.4 500.4 391.2 494 391.6 C484.6 392.4 478.4 398 478.4 407 C478.4 417.6 482 423.6 491 423.6 C499 423.6 504 420.8 509.6 421.6 C516 422.6 518.6 428 521 437" fill="none" stroke="#e60012" stroke-width="9" stroke-linecap="round" stroke-linejoin="round"/>
<line x1="485.4" y1="378.4" x2="487.4" y2="383.6" stroke="#f2d410" stroke-width="4.2" stroke-linecap="round"/>
<line x1="465.2" y1="386.8" x2="473.6" y2="392.8" stroke="#35c020" stroke-width="4.2" stroke-linecap="round"/>
<line x1="462" y1="404.4" x2="468.6" y2="405.6" stroke="#1880e8" stroke-width="4" stroke-linecap="round"/>
<text x="523" y="409.2" font-size="24.5" font-weight="bold" fill="#e01818" font-family="'Liberation Serif','Noto Serif CJK SC',serif" textLength="75.5" lengthAdjust="spacingAndGlyphs">键打印</text>
<text x="521" y="427.2" font-size="12.6" font-weight="bold" fill="#111" font-family="'Liberation Sans',sans-serif" textLength="78.5" lengthAdjust="spacingAndGlyphs">ejdyin.com</text></svg>
</body></html>
